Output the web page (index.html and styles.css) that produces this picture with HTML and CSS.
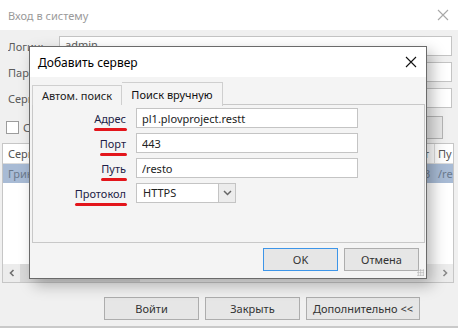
FILE: index.html
```html
<!DOCTYPE html>
<html lang="ru">
<head>
    <meta charset="UTF-8" />
    <title>Вход в систему</title>
    <link rel="stylesheet" href="styles.css">
</head>
<body>

<div class="login-window">
    <div class="titlebar">
        <span>Вход в систему</span>
        <svg class="close" width="12" height="12" viewBox="0 0 12 12"><path d="M1 1 L11 11 M11 1 L1 11" stroke="#a8a8a8" stroke-width="1.1"/></svg>
    </div>

    <div class="fields">
        <label>Логин:</label>
        <div class="field">admin</div>
        <label class="covered">Пароль:</label>
        <div class="field"></div>
        <label class="covered">Сервер:</label>
        <div class="field"></div>
    </div>

    <div class="options">
        <span class="checkbox"></span>
        <span class="covered-text">Со</span>
        <span class="spacer"></span>
        <button class="small-btn"></button>
    </div>

    <div class="server-list">
        <div class="list-row list-head">
            <span class="col-name">Серв</span>
            <span class="col-port">т</span>
            <span class="col-path">Пу</span>
        </div>
        <div class="list-row selected">
            <span class="col-name">Грин</span>
            <span class="col-port">3</span>
            <span class="col-path">/re</span>
        </div>
        <div class="list-fill"></div>
        <div class="hscroll">
            <span class="arrow">
                <svg width="8" height="8" viewBox="0 0 8 8"><path d="M5.5 1 L2.5 4 L5.5 7" fill="none" stroke="#6e6e6e" stroke-width="1.6"/></svg>
            </span>
            <span class="thumb"></span>
            <span class="track"></span>
            <span class="arrow">
                <svg width="8" height="8" viewBox="0 0 8 8"><path d="M2.5 1 L5.5 4 L2.5 7" fill="none" stroke="#8a8a8a" stroke-width="1.6"/></svg>
            </span>
        </div>
    </div>

    <div class="actions">
        <button class="btn">Войти</button>
        <button class="btn">Закрыть</button>
        <button class="btn btn-wide">Дополнительно &lt;&lt;</button>
    </div>
</div>

<!-- модальное окно поверх формы входа -->
<div class="dialog">
    <div class="dialog-title">
        <span>Добавить сервер</span>
        <svg class="dialog-close" width="12" height="12" viewBox="0 0 12 12"><path d="M1 1 L11 11 M11 1 L1 11" stroke="#111" stroke-width="1.1"/></svg>
    </div>

    <div class="tabs">
        <div class="tab">Автом. поиск</div>
        <div class="tab active">Поиск вручную</div>
    </div>

    <div class="tab-panel">
        <div class="server-form">
            <label class="marked">Адрес</label>
            <input type="text" value="pl1.plovproject.restt" />
            <label class="marked">Порт</label>
            <input type="text" value="443" />
            <label class="marked">Путь</label>
            <input type="text" value="/resto" />
            <label class="marked">Протокол</label>
            <div class="select">
                <span class="select-value">HTTPS</span>
                <span class="select-arrow">
                    <svg width="9" height="6" viewBox="0 0 9 6"><path d="M1 1 L4.5 4.5 L8 1" fill="none" stroke="#666" stroke-width="1.5"/></svg>
                </span>
            </div>
        </div>
    </div>

    <div class="dialog-buttons">
        <button class="btn btn-default">OK</button>
        <button class="btn">Отмена</button>
    </div>
    <span class="grip"></span>
</div>

</body>
</html>
```

FILE: styles.css
```css
* {
    box-sizing: border-box;
    margin: 0;
    padding: 0;
}
body {
    width: 458px;
    height: 328px;
    overflow: hidden;
    position: relative;
    font-family: 'Noto Sans', 'Open Sans', sans-serif;
    font-size: 11px;
    background: #fff;
}
button {
    font-family: inherit;
    font-size: 11px;
}

/* окно входа (на заднем плане) */
.login-window {
    height: 328px;
    background: #f0f0f0;
    border-bottom: 2px solid #c9c9c9;
    color: #5c5c5c;
}
.titlebar {
    height: 30px;
    background: #fff;
    display: flex;
    align-items: center;
    justify-content: space-between;
    padding: 0 9px 0 8px;
    color: #9a9a9a;
}
.fields {
    display: grid;
    grid-template-columns: 51px 1fr;
    row-gap: 6px;
    align-items: center;
    padding: 6px 6px 0 8px;
}
.fields label {
    overflow: hidden;
    white-space: nowrap;
}
/* подписи, которые закрыты диалогом */
.fields label.covered {
    width: 21px;
}
.covered-text {
    width: 10px;
    overflow: hidden;
    white-space: nowrap;
}
.field {
    height: 20px;
    background: #fff;
    border: 1px solid #c4c4c4;
    padding: 0 5px;
    line-height: 16px;
}
.options {
    display: flex;
    align-items: center;
    padding: 8px 15px 0 6px;
    gap: 4px;
}
.checkbox {
    width: 13px;
    height: 13px;
    border: 1px solid #9c9c9c;
    background: #fff;
}
.spacer {
    flex: 1;
}
.small-btn {
    width: 60px;
    height: 23px;
    border: 1px solid #b4b4b4;
    background: #e6e6e6;
}
.server-list {
    margin: 4px 4px 0 2px;
    height: 140px;
    border: 1px solid #c6c6c6;
    background: #fff;
    display: flex;
    flex-direction: column;
}
.list-row {
    height: 19px;
    display: flex;
    align-items: center;
    white-space: nowrap;
}
.list-head {
    height: 20px;
    border-bottom: 1px solid #dcdcdc;
    color: #555;
}
.list-row.selected {
    background: #a8bbd5;
    color: #6b7a8e;
}
.col-name {
    width: 421px;
    padding-left: 5px;
}
.col-port {
    width: 10px;
}
.col-path {
    flex: 1;
    padding-left: 3px;
    border-left: 1px solid #dcdcdc;
    align-self: stretch;
    display: flex;
    align-items: center;
}
.list-row.selected .col-path {
    border-left-color: transparent;
}
.list-fill {
    flex: 1;
}
.hscroll {
    height: 18px;
    display: flex;
    background: #ececec;
}
.hscroll .arrow {
    width: 17px;
    display: flex;
    align-items: center;
    justify-content: center;
}
.hscroll .thumb {
    width: 120px;
    background: #d9d9d9;
}
.hscroll .track {
    flex: 1;
}
.actions {
    display: flex;
    justify-content: flex-end;
    gap: 6px;
    padding: 14px 38px 0 0;
}
.btn {
    width: 95px;
    height: 23px;
    background: #e6e6e6;
    border: 1px solid #adadad;
    color: #333;
}
.btn-wide {
    width: 114px;
}

/* диалог «Добавить сервер» */
.dialog {
    position: absolute;
    left: 29px;
    top: 46px;
    width: 398px;
    height: 233px;
    background: #f4f4f4;
    border: 1px solid #6a6a6a;
    box-shadow: 5px 6px 14px rgba(0, 0, 0, 0.28);
}
.dialog-title {
    height: 30px;
    background: #fff;
    display: flex;
    align-items: center;
    justify-content: space-between;
    padding: 0 9px 0 8px;
    color: #000;
    font-size: 12px;
}
.tabs {
    display: flex;
    align-items: flex-end;
    height: 27px;
    padding-left: 2px;
    position: relative;
    z-index: 1;
}
.tab {
    height: 20px;
    width: 90px;
    border: 1px solid #cfcfcf;
    border-bottom: none;
    display: flex;
    align-items: center;
    justify-content: center;
    color: #222;
    margin-bottom: -1px;
    background: #f4f4f4;
}
.tab.active {
    height: 24px;
    width: 101px;
    border-left: none;
    color: #111;
    margin-bottom: -2px;
}
.tab-panel {
    margin: 0 1px 0 2px;
    height: 139px;
    border: 1px solid #c8c8c8;
    background: #f4f4f4;
    padding-top: 3px;
}
.server-form {
    display: grid;
    grid-template-columns: 93px 222px;
    column-gap: 10px;
    row-gap: 5px;
    align-items: center;
}
.server-form label {
    justify-self: end;
    position: relative;
    color: #1e1e46;
}
.server-form label.marked::after {
    content: "";
    position: absolute;
    left: 0;
    right: -1px;
    bottom: -5px;
    height: 3px;
    border-radius: 2px;
    background: #e3151b;
}
.server-form input {
    height: 20px;
    border: 1px solid #c4c4c4;
    background: #fff;
    padding: 0 5px;
    font-family: inherit;
    font-size: 11px;
    color: #222;
}
.select {
    width: 100px;
    height: 20px;
    border: 1px solid #c4c4c4;
    background: #fff;
    display: flex;
}
.select-value {
    flex: 1;
    padding-left: 6px;
    line-height: 18px;
    color: #222;
}
.select-arrow {
    width: 17px;
    border-left: 1px solid #c4c4c4;
    background: #ececec;
    display: flex;
    align-items: center;
    justify-content: center;
}
.dialog-buttons {
    display: flex;
    justify-content: flex-end;
    gap: 6px;
    padding: 5px 7px 0 0;
}
.dialog-buttons .btn {
    width: 75px;
}
.btn-default {
    border-color: #3d95e8;
}
.grip {
    position: absolute;
    right: 2px;
    bottom: 2px;
    width: 7px;
    height: 7px;
    background: radial-gradient(circle, #b8b8b8 0.8px, transparent 1px) 0 0 / 2.5px 2.5px;
}
```
